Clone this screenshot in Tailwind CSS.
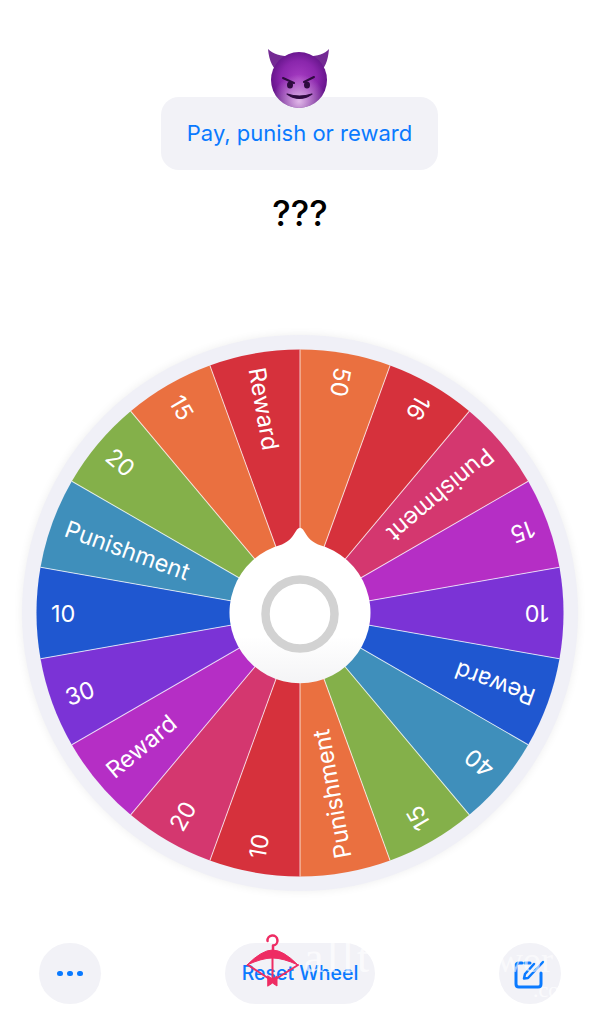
<!DOCTYPE html>
<html lang="en">
<head>
    <meta charset="UTF-8">
    <title>Pay, punish or reward</title>
    <script src="https://cdn.jsdelivr.net/npm/@tailwindcss/browser@4"></script>
</head>
<body class="bg-white font-[Inter,sans-serif] w-[600px] h-[1015px] overflow-hidden relative">
    <main class="flex flex-col items-center h-full pt-[47px]">
        <!-- devil emoji sits over the top edge of the title button -->
        <svg class="relative z-10 -mb-[12px] -ml-[3px]" width="64" height="62" viewBox="0 0 64 62">
            <defs>
                <radialGradient id="face" cx="50%" cy="48%" r="54%">
                    <stop offset="0" stop-color="#a63cc2"/>
                    <stop offset="0.6" stop-color="#8a26ac"/>
                    <stop offset="1" stop-color="#5f1285"/>
                </radialGradient>
                <radialGradient id="glow" cx="50%" cy="88%" r="48%">
                    <stop offset="0" stop-color="#e0b8e8"/>
                    <stop offset="1" stop-color="#e0b8e8" stop-opacity="0"/>
                </radialGradient>
            </defs>
            <path d="M1 2C2 14 6 22 14 28L27 9C17 10 7 8 1 2Z" fill="#742a94"/>
            <path d="M62 2C61 14 58 22 50 28L37 9C47 10 57 8 62 2Z" fill="#742a94"/>
            <circle cx="32" cy="33" r="28" fill="url(#face)"/>
            <circle cx="32" cy="33" r="28" fill="url(#glow)"/>
            <ellipse cx="23" cy="38" rx="3" ry="3.500" fill="#2e0b3f"/>
            <ellipse cx="40" cy="38" rx="3" ry="3.500" fill="#2e0b3f"/>
            <path d="M16 31L27 36M47 30L37 35" stroke="#2e0b3f" stroke-width="2" stroke-linecap="round"/>
            <path d="M20 47Q32.500 56 45 47Q32.500 51 20 47Z" fill="#2e0b3f" stroke="#2e0b3f" stroke-width="1.200" stroke-linejoin="round"/>
        </svg>
        <button class="w-[277px] h-[73px] rounded-[18px] bg-[#f2f2f7] text-[#0a7aff] text-[22px] -ml-[1px]">Pay, punish or reward</button>
        <h1 class="mt-[21px] h-[44px] leading-[44px] text-[35px] font-medium text-black">???</h1>

        <!-- wheel -->
        <div class="mt-[100px] w-[556px] h-[556px] rounded-full bg-[#f0f0f7] shadow-[0_0_10px_rgba(0,0,0,0.07)] shrink-0">
            <svg id="wheel" width="556" height="556" viewBox="-278 -278 556 556"></svg>
        </div>

        <!-- bottom buttons -->
        <div class="mt-[52px] w-full px-[39px] flex justify-between items-center">
            <button class="w-[62px] h-[61px] rounded-full bg-[#f2f2f7] flex items-center justify-center gap-[4.500px]">
                <span class="w-[5.500px] h-[5.500px] rounded-full bg-[#0a7aff]"></span>
                <span class="w-[5.500px] h-[5.500px] rounded-full bg-[#0a7aff]"></span>
                <span class="w-[5.500px] h-[5.500px] rounded-full bg-[#0a7aff]"></span>
            </button>
            <button class="w-[150px] h-[61px] rounded-full bg-[#f2f2f7] text-[#0a7aff] text-[19.500px] font-medium">Reset Wheel</button>
            <button class="w-[62px] h-[61px] rounded-full bg-[#f2f2f7] flex items-center justify-center">
                <svg width="32" height="32" viewBox="0 0 32 32" fill="none" stroke="#0a7aff" stroke-width="3" stroke-linecap="round" stroke-linejoin="round">
                    <path d="M8 5H5Q2 5 2 8V26Q2 29 5 29H24Q27 29 27 26V15"/>
                    <path d="M11 5H16"/>
                    <path d="M29 4L14 20L10 20.500L11 16L20 6" stroke-width="2.500"/>
                </svg>
            </button>
        </div>
    </main>

    <!-- watermark: white lettering and hanger logo over the buttons -->
    <div class="absolute left-[304px] top-[933px] text-white/70 text-[44px] leading-[50px] font-[Liberation_Serif,serif] tracking-[3px] whitespace-nowrap">allt</div>
    <div class="absolute left-[497px] top-[939px] text-white/60 text-[36px] leading-[42px] font-[Liberation_Serif,serif] whitespace-nowrap">wor</div>
    <div class="absolute left-[533px] top-[977px] text-white/70 text-[22px] leading-[26px] font-[Liberation_Serif,serif] whitespace-nowrap">.co</div>
    <svg class="absolute left-[240px] top-[930px]" width="66" height="62" viewBox="240 930 66 62" fill="none" stroke="#ee2c63" stroke-linecap="round" stroke-linejoin="round">
        <path d="M267.500 941A5 5 0 1 1 273 945.500V951" stroke-width="2.500"/>
        <path d="M247 965Q262 950 272.500 950Q283 950 298 965Q283 958 272.500 958Q262 958 247 965Z" fill="#ee2c63" stroke-width="1"/>
        <path d="M272.500 955V982M248 965L272.500 981L298 965" stroke-width="2"/>
        <path d="M268 976L272.500 979L277 976L277 986L272.500 983L268 986Z" fill="#ee2c63" stroke-width="1"/>
    </svg>

    <script>
        // clockwise from twelve o'clock: label, colour
        const slices = [
            ['50', '#ea7040'], ['16', '#d6313c'], ['Punishment', '#d4376f'], ['15', '#b52ec5'],
            ['10', '#7b33d6'], ['Reward', '#1f57d0'], ['40', '#3f8fbb'], ['15', '#84b04a'],
            ['Punishment', '#ea7040'], ['10', '#d6313c'], ['20', '#d4376f'], ['Reward', '#b52ec5'],
            ['30', '#7b33d6'], ['10', '#1f57d0'], ['Punishment', '#3f8fbb'], ['20', '#84b04a'],
            ['15', '#ea7040'], ['Reward', '#d6313c']
        ];
        const R = 263.5;
        let html = '';
        slices.forEach(function (slice, i) {
            html += `<path d="M0 0L0 ${-R}A${R} ${R} 0 0 1 90.120 -247.600Z" fill="${slice[1]}" transform="rotate(${i * 20})"/>`;
        });
        slices.forEach(function (slice, i) {
            html += `<line x1="0" y1="0" x2="0" y2="${-R}" stroke="#ffffff" stroke-opacity="0.75" stroke-width="1" transform="rotate(${i * 20})"/>`;
        });
        slices.forEach(function (slice, i) {
            html += `<text x="-249" y="0" dominant-baseline="central" fill="#ffffff" font-size="23.500" transform="rotate(${i * 20 + 10 - 270})">${slice[0]}</text>`;
        });
        // hub with its pointer, then the grey ring
        html += `<defs><linearGradient id="hub" x1="0" y1="0" x2="0" y2="1"><stop offset="0.7" stop-color="#ffffff"/><stop offset="1" stop-color="#f4f4f6"/></linearGradient></defs>`;
        html += `<path d="M-3 -83.500Q0 -87 3 -83.500C7 -77 10 -72 18 -68.500A70.500 70.500 0 1 1 -18 -68.500C-10 -72 -7 -77 -3 -83.500Z" fill="url(#hub)"/>`;
        html += `<circle cx="0" cy="1" r="34.500" fill="#ffffff" stroke="#d2d2d2" stroke-width="8.500"/>`;
        document.getElementById('wheel').innerHTML = html;
    </script>
</body>
</html>
